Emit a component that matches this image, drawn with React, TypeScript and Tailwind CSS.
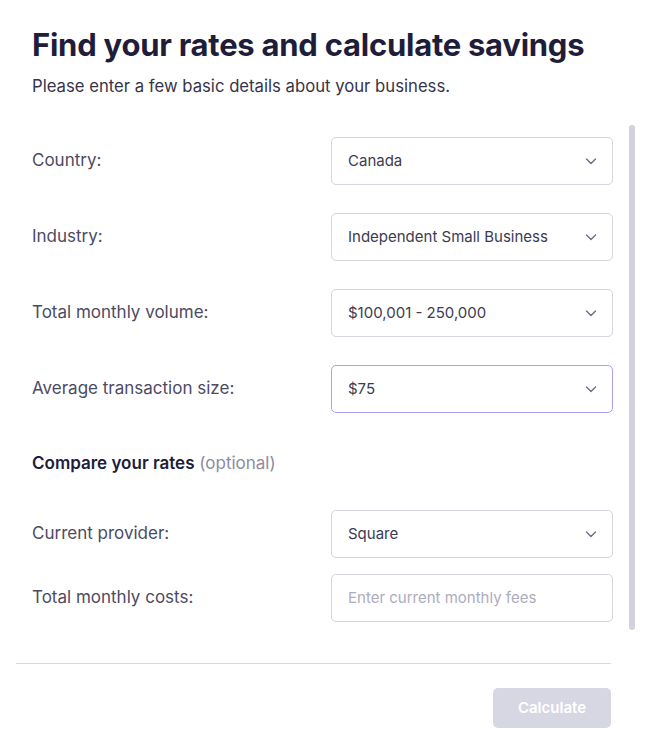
import React from "react";

const Chevron = () => (
  <svg width="14" height="14" viewBox="0 0 14 14" fill="none" className="shrink-0">
    <path d="M2.5 5L7 9.5L11.5 5" stroke="#6e6d85" strokeWidth="1.4" strokeLinecap="round" strokeLinejoin="round" />
  </svg>
);

const Select = ({ value, focused }: { value: string; focused?: boolean }) => (
  <div
    className={`w-[282px] h-12 rounded-[5px] border bg-white flex items-center justify-between pl-4 pr-[14px] ${
      focused ? "border-[#ac9ef5]" : "border-[#d6d5df]"
    }`}
  >
    <span className="text-[15px] text-[#3c3b52]">{value}</span>
    <Chevron />
  </div>
);

const Row = ({ label, children }: { label: string; children: React.ReactNode }) => (
  <div className="flex items-center justify-between h-12">
    <span className="text-[17px] text-[#4c4b63]">{label}</span>
    {children}
  </div>
);

export default function App() {
  return (
    <div className="w-[653px] h-[750px] bg-white overflow-hidden" style={{ fontFamily: "Inter, 'Noto Sans', sans-serif" }}>
      <div className="pl-8 pt-[25px]">
        <h1 className="text-[31px] leading-[40px] font-bold text-[#201d3b] tracking-[-0.25px]">
          Find your rates and calculate savings
        </h1>
        <p className="mt-[9px] text-[16.7px] leading-6 text-[#35344b]">
          Please enter a few basic details about your business.
        </p>
      </div>
      <div className="flex mt-[27px] h-[505px]">
        <div className="pl-8 w-[613px] pt-3 flex flex-col">
          <div className="flex flex-col gap-7">
            <Row label="Country:"><Select value="Canada" /></Row>
            <Row label="Industry:"><Select value="Independent Small Business" /></Row>
            <Row label="Total monthly volume:"><Select value="$100,001 - 250,000" /></Row>
            <Row label="Average transaction size:"><Select value="$75" focused /></Row>
          </div>
          <div className="mt-[38px] text-[17px] leading-6">
            <span className="font-semibold text-[#201d3b]">Compare your rates</span>{" "}
            <span className="text-[#8c8ba0]">(optional)</span>
          </div>
          <div className="mt-[35px] flex flex-col gap-4">
            <Row label="Current provider:"><Select value="Square" /></Row>
            <Row label="Total monthly costs:">
              <div className="w-[282px] h-12 rounded-[5px] border border-[#d6d5df] flex items-center pl-4">
                <span className="text-[15px] text-[#adacbd]">Enter current monthly fees</span>
              </div>
            </Row>
          </div>
        </div>
        <div className="ml-4 w-[6px] h-full rounded-full bg-[#d2d2dc]" />
      </div>
      <div className="ml-4 mt-[33px] w-[595px] h-px bg-[#d9d8e1]" />
      <div className="w-[611px] flex justify-end mt-6">
        <button className="w-[118px] h-10 rounded-[5px] bg-[#d7d6e3] text-white text-[15px] font-semibold">
          Calculate
        </button>
      </div>
    </div>
  );
}
